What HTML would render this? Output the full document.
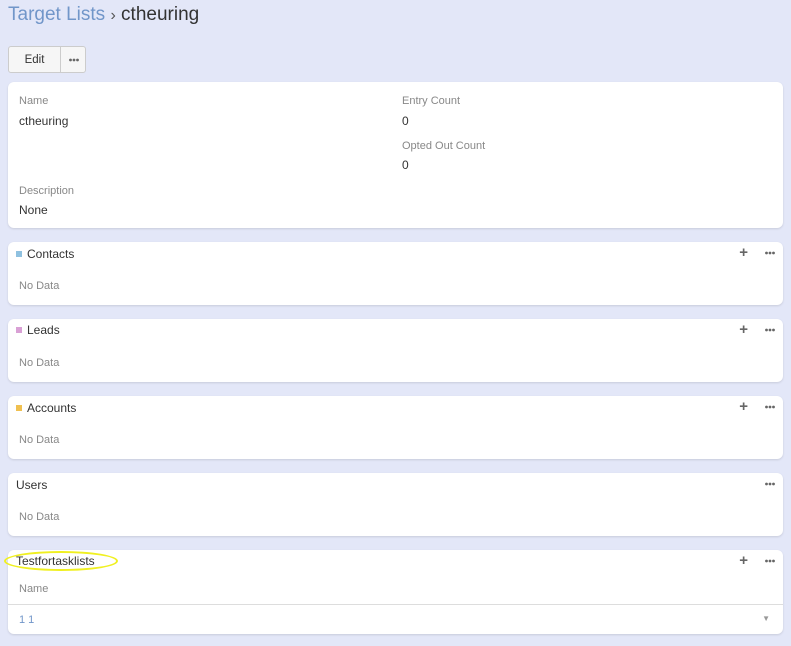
<!DOCTYPE html>
<html><head><style>
body{margin:0;width:791px;height:646px;background:#e3e7f8;font-family:"Liberation Sans",sans-serif;font-size:11px;color:#333;position:relative;overflow:hidden}
.a{position:absolute}
.p{position:absolute;left:8px;width:775px;background:#fff;border-radius:6px;box-shadow:0 1px 2px rgba(0,0,0,.12)}
.lbl{color:#888;font-size:11px}
.t{font-size:12px;color:#333}
.nd{color:#888}
.sq{display:inline-block;width:6px;height:6px;margin-right:5px;vertical-align:1px}
.plus{position:absolute;right:35px;top:2px;font-size:15px;color:#666;font-weight:bold}
.dots{position:absolute;right:8px;top:9px;width:10px;height:4px}
</style></head><body>
<svg width="0" height="0" style="position:absolute"><symbol id="d" viewBox="0 0 10 4"><circle cx="1.5" cy="2" r="1.4" fill="#666"/><circle cx="5" cy="2" r="1.4" fill="#666"/><circle cx="8.5" cy="2" r="1.4" fill="#666"/></symbol></svg>
<div class="a" style="left:8px;top:4px;font-size:19px;color:#7196c9">Target Lists <span style="color:#555;font-size:16px">›</span> <span style="color:#333">ctheuring</span></div>
<div class="a" style="left:8px;top:46px;width:78px;height:27px;border:1px solid #ccc;border-radius:3px;background:#f6f6f6;box-sizing:border-box">
<div class="a" style="left:0;top:2px;width:51px;height:23px;line-height:23px;text-align:center;font-size:11.5px">Edit</div>
<div class="a" style="left:51px;top:0;width:1px;height:25px;background:#ccc"></div>
<svg class="a" style="left:59px;top:11px" width="12" height="4"><use href="#d"/></svg></div>

<div class="p" style="top:82px;height:146px">
<div class="a lbl" style="left:11px;top:13px">Name</div><div class="a t" style="left:11px;top:32px">ctheuring</div>
<div class="a lbl" style="left:394px;top:13px">Entry Count</div><div class="a t" style="left:394px;top:32px">0</div>
<div class="a lbl" style="left:394px;top:58px">Opted Out Count</div><div class="a t" style="left:394px;top:76px">0</div>
<div class="a lbl" style="left:11px;top:103px">Description</div><div class="a t" style="left:11px;top:121px">None</div>
</div>

<div class="p" style="top:242px;height:63px"><div class="a t" style="left:8px;top:5px"><span class="sq" style="background:#8fc1e0"></span>Contacts</div><span class="plus">+</span><svg class="dots"><use href="#d"/></svg><div class="a nd" style="left:11px;top:38px">No Data</div></div>
<div class="p" style="top:319px;height:63px"><div class="a t" style="left:8px;top:4px"><span class="sq" style="background:#d9a0d5"></span>Leads</div><span class="plus">+</span><svg class="dots"><use href="#d"/></svg><div class="a nd" style="left:11px;top:38px">No Data</div></div>
<div class="p" style="top:396px;height:63px"><div class="a t" style="left:8px;top:5px"><span class="sq" style="background:#f0c050"></span>Accounts</div><span class="plus">+</span><svg class="dots"><use href="#d"/></svg><div class="a nd" style="left:11px;top:38px">No Data</div></div>
<div class="p" style="top:473px;height:63px"><div class="a t" style="left:8px;top:5px">Users</div><svg class="dots"><use href="#d"/></svg><div class="a nd" style="left:11px;top:38px">No Data</div></div>
<div class="p" style="top:550px;height:84px">
<div class="a" style="left:-4px;top:1px;width:114px;height:20px;border:2px solid #f0f020;border-radius:50%;box-sizing:border-box"></div>
<div class="a t" style="left:8px;top:4px">Testfortasklists</div><span class="plus">+</span><svg class="dots"><use href="#d"/></svg>
<div class="a lbl" style="left:11px;top:33px">Name</div>
<div class="a" style="left:0;top:54px;width:775px;height:1px;background:#ddd"></div>
<div class="a" style="left:11px;top:64px;color:#7196c9">1 1</div>
<div class="a" style="right:13px;top:64px;color:#999;font-size:8px">▼</div>
</div>
</body></html>
